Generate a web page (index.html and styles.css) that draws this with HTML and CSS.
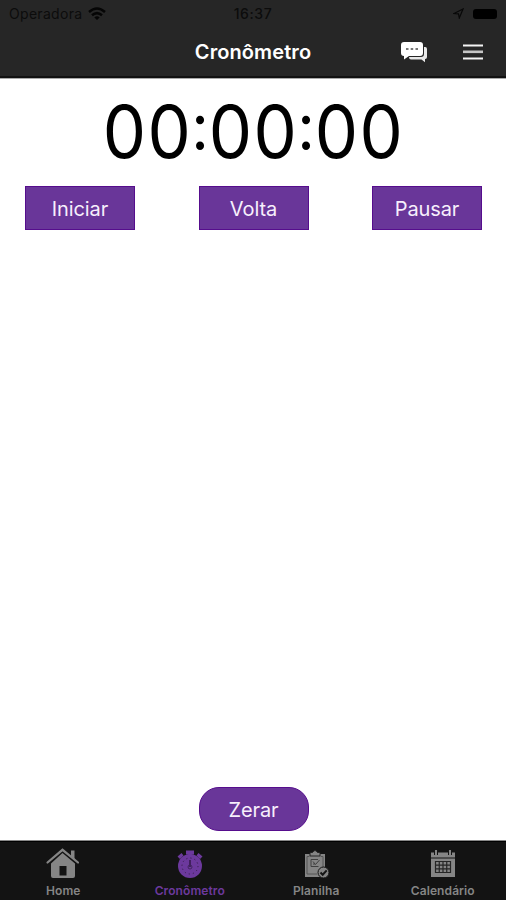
FILE: index.html
```html
<!DOCTYPE html>
<html lang="pt-BR">
<head>
<meta charset="utf-8">
<title>Cronômetro</title>
<link rel="stylesheet" href="styles.css">
</head>
<body>
<div class="app">
  <header class="header">
    <div class="status">
      <div class="carrier"><span>Operadora</span>
        <svg width="18" height="14" viewBox="0 0 18 14" fill="none" stroke="#050505" stroke-width="2.5"><path d="M1 5Q9-2 17 5M4 8.3Q9 4 14 8.3"/><path d="M6.3 10.4Q9 8.2 11.7 10.4L9 13Z" fill="#050505" stroke="none"/></svg>
      </div>
      <span class="clock">16:37</span>
      <div class="indicators">
        <svg width="11" height="11" viewBox="0 0 11 11" fill="none" stroke="#080808" stroke-width="1.2"><path d="M1 5.5 10 1 6.3 10 5.5 5.8Z"/></svg>
        <span class="battery"></span>
      </div>
    </div>
    <div class="navbar">
      <h1 class="title">Cronômetro</h1>
      <div class="actions">
        <svg width="28" height="22" viewBox="0 0 28 22"><path d="M24 6h1.2Q27 6 27 8v8q0 2-1.8 2H25v3.2L21.500 18.500H11q-2 0-2-2.500H21q3 0 3-3Z" fill="#e8e8e8"/><path d="M4 1H20q3 0 3 3v8q0 3-3 3H9L4 18.500V15Q1 15 1 12V4Q1 1 4 1Z" fill="#fff"/><path d="M6 7h2.500v2H6zm4.700 0h2.500v2h-2.500zm4.800 0H18v2h-2.500z" fill="#777"/></svg>
        <svg class="menu" width="20" height="16" viewBox="0 0 20 16"><path d="M0 .5h20v2H0zm0 12.900h20v2H0z" fill="#f4f4f4"/><path d="M0 6.500h20v2.600H0z" fill="#c6c6c6"/></svg>
      </div>
    </div>
  </header>
  <main class="main">
    <div class="timer">00<span class="colon">:</span>00<span class="colon">:</span>00</div>
    <div class="controls">
      <button class="button">Iniciar</button>
      <button class="button">Volta</button>
      <button class="button">Pausar</button>
    </div>
    <button class="button reset">Zerar</button>
  </main>
  <nav class="tabs">
    <div class="tab">
      <svg width="36" height="32" viewBox="0 0 36 32"><path d="M2.500 15.500 17.500 2.800 33 15.500" fill="none" stroke="#858585" stroke-width="2.200" stroke-linecap="round"/><path d="M26 3.500h3.500v9L26 9.500Z" fill="#858585"/><path fill-rule="evenodd" d="M17.500 6 30 16.500V29q0 2-2 2H8q-2 0-2-2V16.500ZM14.500 19v9.500h7V19Z" fill="#858585"/></svg>
      <span>Home</span>
    </div>
    <div class="tab active">
      <svg width="28" height="32" viewBox="0 0 28 32"><path d="M10 3.500h8v4h-2.500V10h-3V7.500H10ZM1.500 9.500l4-3.500 2 2.500L4 12ZM26.500 9.500l-4-3.500-2 2.500L24 12Z" fill="#6c399d"/><circle cx="14" cy="19" r="12" fill="#6c399d"/><circle cx="14" cy="19" r="8" fill="none" stroke="#37204b" stroke-dasharray="1.200 3"/><path d="M14 13v7" stroke="#33194b" stroke-width="1.500"/><circle cx="14" cy="20" r="2" fill="none" stroke="#42245f"/></svg>
      <span>Cronômetro</span>
    </div>
    <div class="tab">
      <svg width="28" height="32" viewBox="0 0 28 32"><path d="M3 7h20v23H3z" fill="#858585"/><path d="M8 9V5.500h2.500Q13 1.500 15.500 5.500H18V9Z" fill="#858585" stroke="#222" stroke-width="1"/><path d="M5 9.500h2.500m11 0H21V21M5 9.500V27h10" fill="none" stroke="#555"/><path d="M9 12.500h7M9 12.500v7h7.500m-5.500-5 2.500 3 4-4.500M11 17h2" fill="none" stroke="#404040"/><circle cx="21.500" cy="25.500" r="5.500" fill="#858585" stroke="#151515"/><path d="m18.500 25.500 2.200 2.200 4-4.400" fill="none" stroke="#151515" stroke-width="2"/></svg>
      <span>Planilha</span>
    </div>
    <div class="tab">
      <svg width="28" height="32" viewBox="0 0 28 32"><path d="M2 5.500h24v5H2zm0 6h24V30H2z" fill="#858585"/><path d="M7 3v5M21 3v5" stroke="#151515" stroke-width="4"/><path d="M7 3v5M21 3v5" stroke="#858585" stroke-width="2"/><path d="M6.500 14.500h15v11h-15zm3.750 0v11m3.750-11v11m3.750-11v11M6.500 18.200h15m-15 3.600h15" fill="none" stroke="#252525" stroke-width="1.200"/></svg>
      <span>Calendário</span>
    </div>
  </nav>
</div>
</body>
</html>
```
FILE: styles.css
```css
* { box-sizing: border-box; }
body { margin: 0; font-family: Inter, sans-serif; background: #fff; }
.app { height: 900px; display: flex; flex-direction: column; overflow: hidden; }
svg { display: block; flex: none; }
.header { height: 78px; background: #262626; border-bottom: 2px solid #111; box-shadow: 0 1px #aaa; }
.status { height: 27px; display: grid; grid-template-columns: 1fr auto 1fr; align-items: center; padding: 0 9px; color: #0c0c0c; font-size: 14px; }
.carrier { display: flex; align-items: center; gap: 6px; letter-spacing: .3px; }
.clock { font-weight: 500; letter-spacing: .6px; }
.indicators { display: flex; align-items: center; justify-content: flex-end; gap: 9px; }
.battery { width: 24px; height: 10px; border-radius: 3px; background: #000; }
.navbar { height: 50px; display: grid; grid-template-columns: 1fr auto 1fr; align-items: center; }
.title { grid-column: 2; margin: 0; color: #fff; font-size: 20px; line-height: 30px; font-weight: 600; letter-spacing: .1px; }
.actions { display: flex; align-items: center; justify-content: flex-end; gap: 35px; padding-right: 23px; }
.main { flex: 1; display: flex; flex-direction: column; padding: 13px 24px 10px 25px; }
.timer { height: 82px; line-height: 82px; text-align: center; color: #000; font-size: 73px; font-weight: 400; letter-spacing: 1.5px; white-space: nowrap; transform: scaleX(.94); }
.colon { display: inline-block; width: 17.6px; height: 82px; line-height: 72px; vertical-align: top; font-size: 65px; letter-spacing: 0; text-indent: -1px; }
.controls { display: flex; justify-content: space-between; margin-top: 13px; }
.button { width: 110px; height: 44px; padding: 1px 0 0; border: 1px solid #560d8d; background: #693699; color: #f7effc; font: 400 20px/42px Inter, sans-serif; letter-spacing: -.1px; }
.reset { margin: auto auto 0; border-radius: 20px; }
.tabs { height: 59px; background: #131313; border-top: 1px solid #000; box-shadow: 0 -1px #888; display: grid; grid-template-columns: repeat(4, 1fr); }
.tab { display: flex; flex-direction: column; align-items: center; padding-top: 5px; color: #858585; font-size: 12px; font-weight: 600; line-height: 18px; letter-spacing: .1px; }
.tab span { margin-top: 3px; }
.active { color: #6c399d; }
```
